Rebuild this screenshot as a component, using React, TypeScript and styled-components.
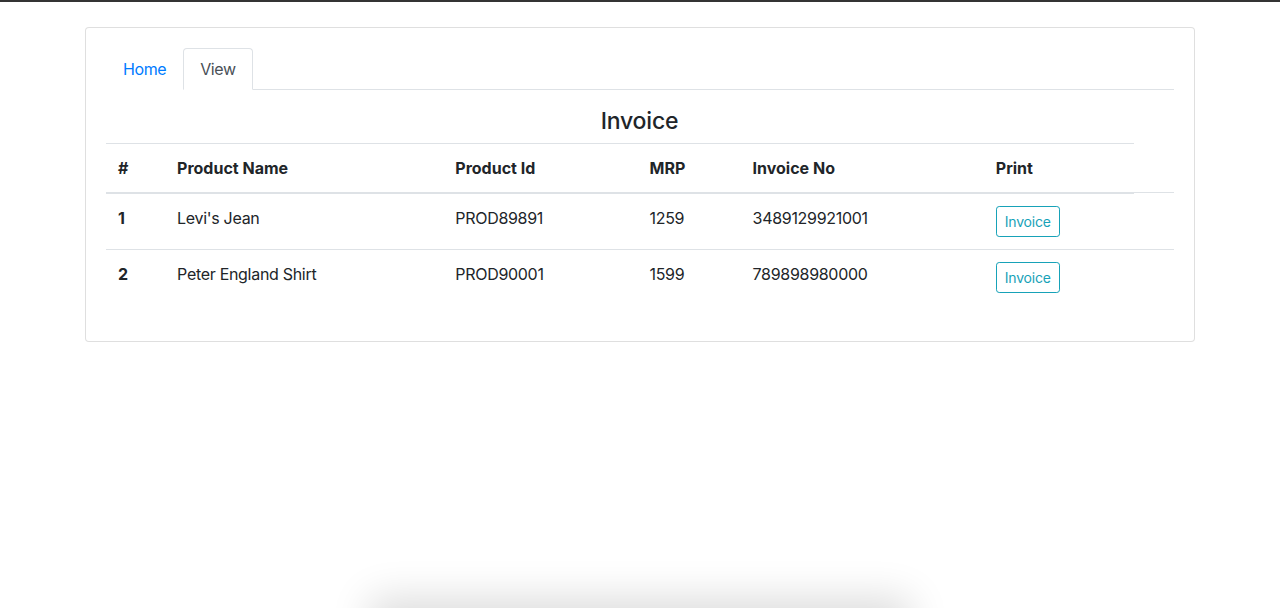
import React from "react";
import styled, { createGlobalStyle } from "styled-components";

const Global = createGlobalStyle`
  html, body { margin: 0; padding: 0; background: #fff; }
  body {
    font-family: Inter, "Noto Sans", "Liberation Sans", sans-serif;
    font-size: 16px;
    line-height: 1.5;
    color: #212529;
    min-height: 608px;
    overflow: hidden;
  }
  * { box-sizing: border-box; }
`;

const TopLine = styled.div`
  height: 2px;
  background: #343434;
`;

const Container = styled.div`
  width: 1140px;
  margin: 0 auto;
  padding: 25px 15px 0;
`;

const Card = styled.div`
  border: 1px solid rgba(0, 0, 0, 0.125);
  border-radius: 4px;
  padding: 20px;
  background: #fff;
`;

const Tabs = styled.ul`
  display: flex;
  list-style: none;
  margin: 0;
  padding: 0;
  border-bottom: 1px solid #dee2e6;
`;

const Tab = styled.li<{ $active?: boolean }>`
  margin-bottom: -1px;
  padding: 8px 16px;
  border: 1px solid transparent;
  border-color: ${(p) => (p.$active ? "#dee2e6 #dee2e6 #fff" : "transparent")};
  border-top-left-radius: 4px;
  border-top-right-radius: 4px;
  background: #fff;
  color: ${(p) => (p.$active ? "#495057" : "#007bff")};
  line-height: 24px;
  letter-spacing: -0.4px;
  cursor: pointer;
`;

const Title = styled.h4`
  margin: 18px 0 7px;
  font-size: 23px;
  font-weight: 500;
  line-height: 1.2;
  text-align: center;
  letter-spacing: -0.2px;
  width: 1067px;
`;

const Table = styled.table`
  width: 100%;
  border-collapse: collapse;
  table-layout: fixed;
  margin-bottom: 16px;
`;

const Th = styled.th`
  text-align: left;
  font-weight: 700;
  padding: 12px;
  border-top: 1px solid #dee2e6;
  border-bottom: 2px solid #dee2e6;
  line-height: 24px;
`;

const Td = styled.td<{ $bold?: boolean }>`
  padding: 12px;
  border-top: 1px solid #dee2e6;
  vertical-align: top;
  line-height: 24px;
  font-weight: ${(p) => (p.$bold ? 700 : 400)};
  letter-spacing: ${(p) => (p.$bold ? "0" : "-0.3px")};
`;

const OutlineButton = styled.button`
  display: block;
  font-family: inherit;
  font-size: 14px;
  line-height: 21px;
  padding: 4px 8px;
  color: #17a2b8;
  background: transparent;
  border: 1px solid #17a2b8;
  border-radius: 3.2px;
  letter-spacing: -0.2px;
  cursor: pointer;
`;

const BottomShadow = styled.div`
  position: fixed;
  left: 380px;
  right: 380px;
  bottom: -40px;
  height: 40px;
  box-shadow: 0 0 40px 10px rgba(0, 0, 0, 0.14);
  background: #e0e0e0;
`;

const widths = [59, 278, 194, 103, 243, 150, 40];
const headers = ["#", "Product Name", "Product Id", "MRP", "Invoice No", "Print"];
const rows = [
  { n: 1, name: "Levi's Jean", id: "PROD89891", mrp: "1259", inv: "3489129921001" },
  { n: 2, name: "Peter England Shirt", id: "PROD90001", mrp: "1599", inv: "789898980000" },
];

export default function App() {
  return (
    <>
      <Global />
      <TopLine />
      <Container>
        <Card>
          <Tabs>
            <Tab>Home</Tab>
            <Tab $active>View</Tab>
          </Tabs>
          <Title>Invoice</Title>
          <Table>
            <colgroup>
              {widths.map((w, i) => (
                <col key={i} style={{ width: w }} />
              ))}
            </colgroup>
            <thead>
              <tr>
                {headers.map((h) => (
                  <Th key={h}>{h}</Th>
                ))}
              </tr>
            </thead>
            <tbody>
              {rows.map((r) => (
                <tr key={r.n}>
                  <Td $bold>{r.n}</Td>
                  <Td>{r.name}</Td>
                  <Td>{r.id}</Td>
                  <Td>{r.mrp}</Td>
                  <Td>{r.inv}</Td>
                  <Td>
                    <OutlineButton>Invoice</OutlineButton>
                  </Td>
                  <Td />
                </tr>
              ))}
            </tbody>
          </Table>
        </Card>
      </Container>
      <BottomShadow />
    </>
  );
}
